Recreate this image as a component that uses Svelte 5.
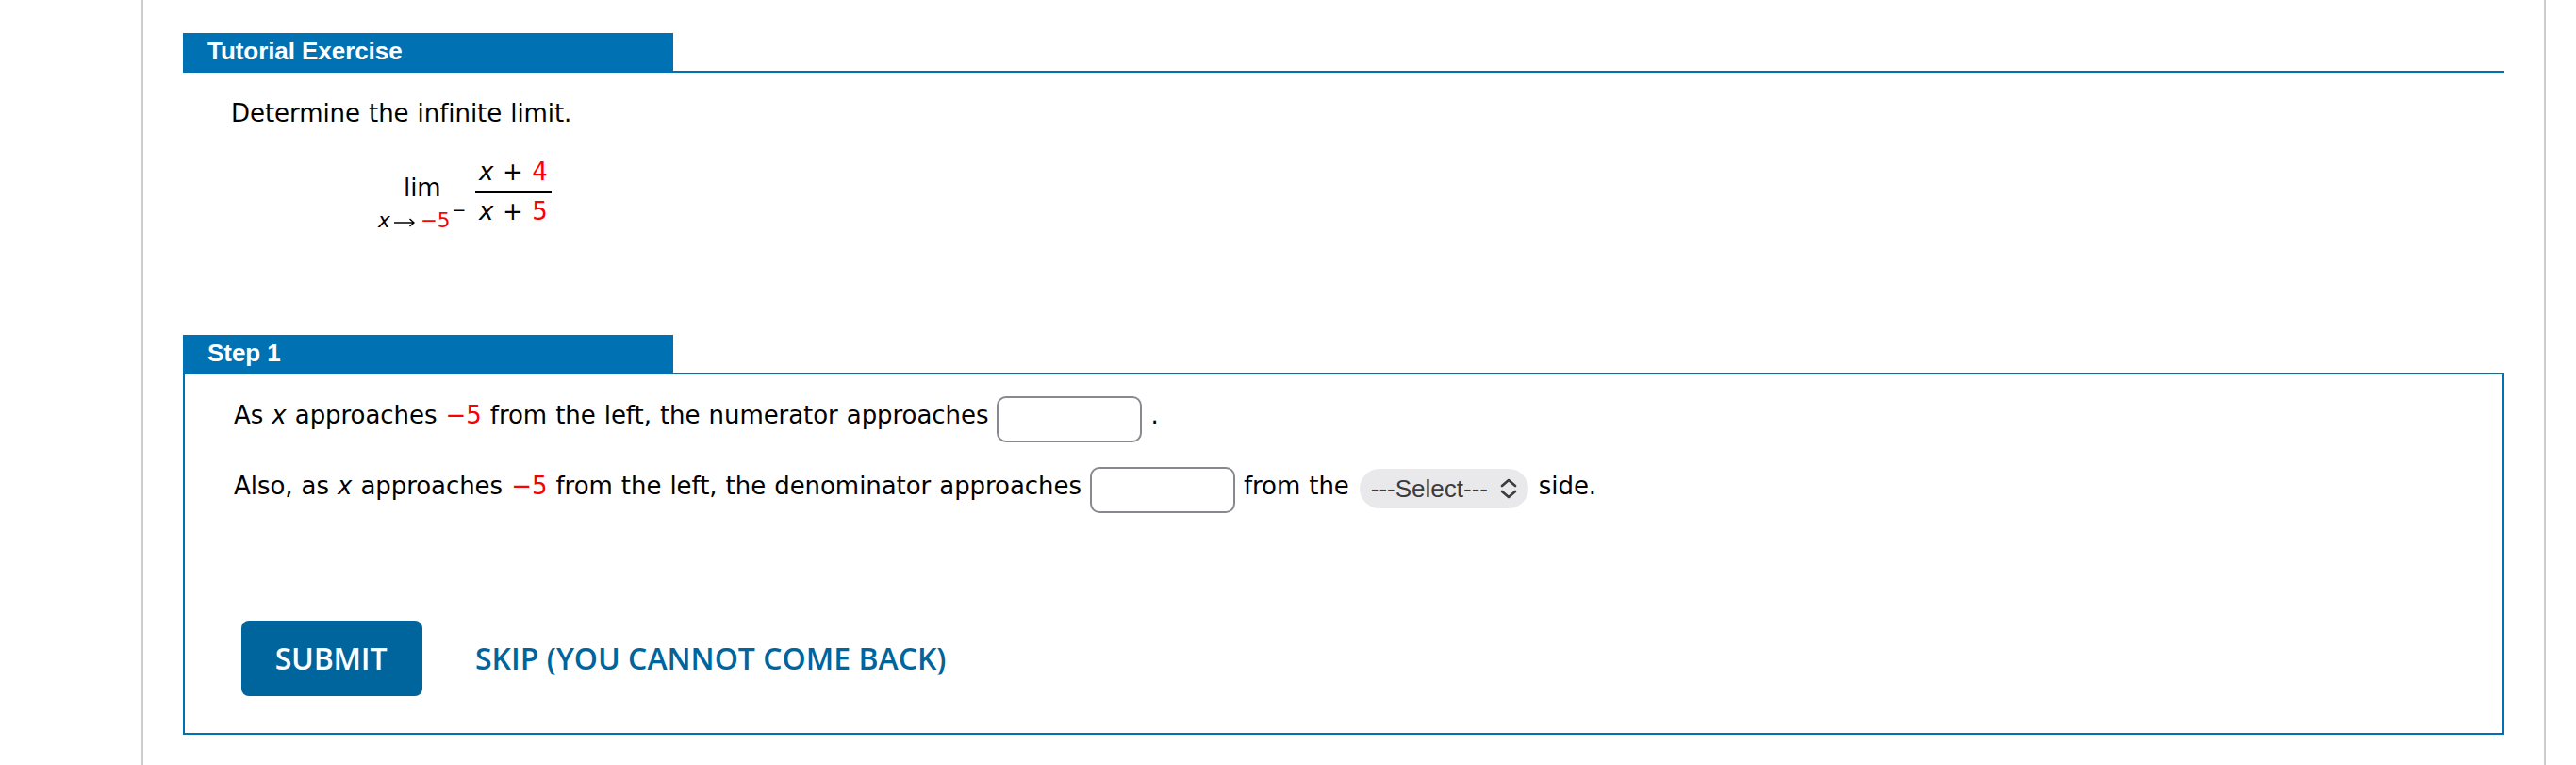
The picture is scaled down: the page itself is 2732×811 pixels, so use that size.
<script lang="ts">
  let numerator = $state('');
  let denominator = $state('');
</script>

<main class="question">
  <section class="exercise">
    <header class="bar"><h2>Tutorial Exercise</h2></header>
    <div class="prompt">
      <p>Determine the infinite limit.</p>
      <div class="formula">
        <div class="limit">
          <span class="lim">lim</span>
          <div class="approach">
            <i>x</i>
            <svg class="arrow" viewBox="0 0 22 10" aria-hidden="true">
              <path d="M0 5H21M16.500 1L21 5L16.500 9" />
            </svg>
            <span class="red">−5</span><sup>−</sup>
          </div>
        </div>
        <div class="fraction">
          <span class="top"><i>x</i> + <span class="red">4</span></span>
          <span class="bottom"><i>x</i> + <span class="red">5</span></span>
        </div>
      </div>
    </div>
  </section>

  <section class="step">
    <header class="bar"><h2>Step 1</h2></header>
    <div class="body">
      <div class="line">
        <span>As <i>x</i> approaches <span class="red">−5</span> from the left, the numerator approaches</span>
        <input bind:value={numerator} aria-label="numerator" />
        <span class="dot">.</span>
      </div>
      <div class="line">
        <span>Also, as <i>x</i> approaches <span class="red">−5</span> from the left, the denominator approaches</span>
        <input bind:value={denominator} aria-label="denominator" />
        <span class="from">from the</span>
        <button class="select" type="button">
          ---Select---
          <svg viewBox="0 0 18 22" aria-hidden="true">
            <path d="M2 8L9 2L16 8M2 14L9 20L16 14" />
          </svg>
        </button>
        <span class="side">side.</span>
      </div>
      <div class="actions">
        <button class="submit" type="button">SUBMIT</button>
        <button class="skip" type="button">SKIP (YOU CANNOT COME BACK)</button>
      </div>
    </div>
  </section>
</main>

<style>
  :global(body) {
    margin: 0;
    background: #fff;
  }

  .question {
    box-sizing: border-box;
    width: 2550px;
    height: 811px;
    margin-left: 150px;
    padding: 35px 42px 0;
    border: solid #ccc;
    border-width: 0 2px;
    overflow: hidden;
    background: #fff;
    color: #000;
    font-family: Verdana, 'DejaVu Sans', sans-serif;
    font-size: 26px;
    letter-spacing: -0.06px;
    word-spacing: 0.9px;
    white-space: nowrap;
  }

  .exercise {
    height: 320px;
  }

  .bar {
    height: 40px;
    border-bottom: 2px solid #0071b2;
  }

  h2 {
    box-sizing: border-box;
    width: 520px;
    height: 42px;
    margin: 0;
    padding-left: 26px;
    background: #0071b2;
    color: #fff;
    font: bold 26px/38px Arial, 'Liberation Sans', sans-serif;
    word-spacing: 0;
  }

  .prompt {
    padding: 27px 0 0 51px;
  }

  p {
    margin: 0;
    line-height: 32px;
  }

  .red {
    color: #f00;
  }

  .formula {
    display: flex;
    margin: 29px 0 0 156px;
  }

  .limit {
    width: 103px;
    padding-top: 18px;
  }

  .lim {
    display: block;
    padding-left: 27px;
    line-height: 32px;
  }

  .approach {
    display: flex;
    align-items: center;
    height: 32px;
    margin-top: 3px;
    font-size: 21.5px;
    line-height: 32px;
  }

  .arrow {
    width: 22px;
    height: 10px;
    margin: 3px 6px 0 4px;
    fill: none;
    stroke: #000;
    stroke-width: 1.5;
  }

  sup {
    margin: -22px 0 0 2px;
    font-size: 18px;
    line-height: 32px;
  }

  .fraction {
    display: flex;
    flex-direction: column;
    width: 81px;
  }

  .fraction > span {
    padding-left: 4px;
    line-height: 34px;
    word-spacing: 1.4px;
  }

  .top {
    height: 38px;
    border-bottom: 2px solid #000;
  }

  .bottom {
    padding-top: 2px;
  }

  .body {
    box-sizing: border-box;
    height: 382px;
    padding: 23px 0 0 52px;
    border: solid #0071b2;
    border-width: 0 2px 2px;
  }

  .line {
    display: flex;
    height: 75px;
    line-height: 40px;
  }

  input {
    box-sizing: border-box;
    width: 154px;
    height: 49px;
    margin: 0 0 0 9px;
    padding: 0 8px;
    border: 2px solid #88888e;
    border-radius: 10px;
    background: #fff;
    font: inherit;
    outline: none;
  }

  .dot {
    margin-left: 9px;
  }

  .from {
    margin-left: 9px;
  }

  .select {
    display: flex;
    align-items: center;
    box-sizing: border-box;
    width: 179px;
    height: 42px;
    margin: 2px 0 0 11px;
    padding: 0 12px 1px;
    justify-content: space-between;
    border: 0;
    border-radius: 21px;
    background: #e9e9eb;
    color: #3c3c3e;
    font: 26px/40px Arial, 'Liberation Sans', sans-serif;
  }

  .select svg {
    width: 18px;
    height: 22px;
    fill: none;
    stroke: #3c3c3e;
    stroke-width: 2.6;
    stroke-linecap: round;
    stroke-linejoin: round;
  }

  .side {
    margin-left: 11px;
  }

  .actions {
    display: flex;
    margin: 88px 0 0 8px;
  }

  .submit,
  .skip {
    height: 80px;
    padding: 0;
    border: 0;
    font: 600 32px/80px 'Open Sans', sans-serif;
  }

  .submit {
    width: 192px;
    padding-right: 2px;
    border-radius: 8px;
    background: #00659c;
    color: #fff;
    letter-spacing: -0.2px;
  }

  .skip {
    margin-left: 56px;
    background: none;
    color: #00659c;
  }
</style>
